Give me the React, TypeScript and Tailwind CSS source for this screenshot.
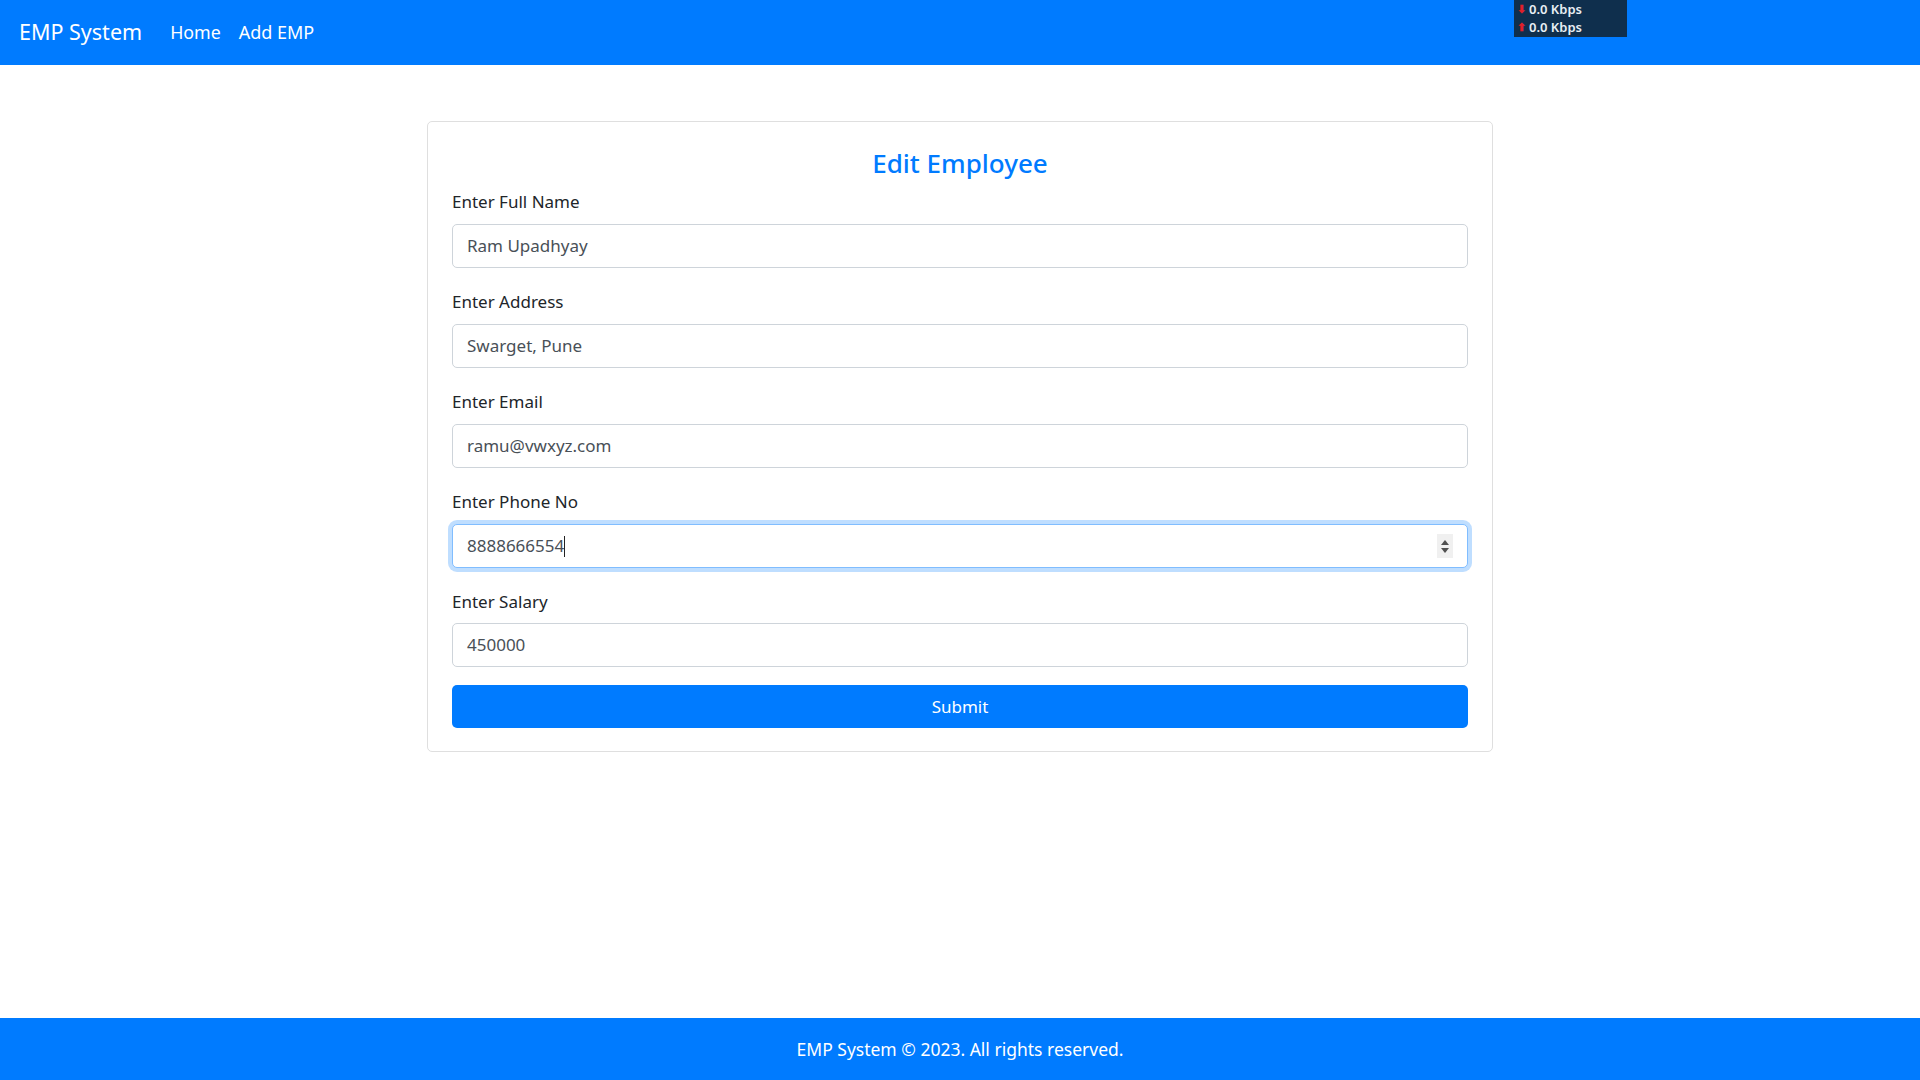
import React from "react";

const font = { fontFamily: '"Noto Sans", "Open Sans", Arial, sans-serif' };

function Field({ label, value, focused, number }: { label: string; value: string; focused?: boolean; number?: boolean }) {
  return (
    <div className="mb-[20px]">
      <label className="block text-[17px] leading-[27px] text-[#212529] mb-[9px]">{label}</label>
      <div
        className={
          "relative h-[44px] w-full rounded-[5px] border bg-white flex items-center px-[14px] text-[17px] text-[#495057] " +
          (focused ? "border-[#80bdff] shadow-[0_0_0_4px_rgba(0,123,255,0.25)]" : "border-[#ced4da]")
        }
      >
        <span>{value}</span>
        {focused && <span className="inline-block w-px h-[21px] bg-[#222]" />}
        {number && (
          <div className="absolute right-[14px] top-[9px] w-[16px] h-[24px] bg-[#f0f0f0] flex flex-col items-center justify-center gap-[3px]">
            <svg width="8" height="5" viewBox="0 0 8 5"><path d="M4 0L8 5H0Z" fill="#505050" /></svg>
            <svg width="8" height="5" viewBox="0 0 8 5"><path d="M0 0H8L4 5Z" fill="#505050" /></svg>
          </div>
        )}
      </div>
    </div>
  );
}

export default function App() {
  return (
    <div className="min-h-[1080px] flex flex-col bg-white" style={font}>
      <nav className="h-[65px] bg-[#007bff] flex items-center pl-[19px] relative">
        <span className="text-white text-[21.5px] mr-[28px]">EMP System</span>
        <span className="text-white text-[17.8px] mr-[18px]">Home</span>
        <span className="text-white text-[18px]">Add EMP</span>
        <div className="absolute left-[1514px] top-0 w-[113px] h-[37px] bg-[#0f2f4d] text-[#e8eef4] text-[13px] font-semibold leading-[18px] pt-[0px] pl-[3px]">
          <div className="flex items-center gap-[3px]"><span className="text-[#e0202a] text-[11px]">⬇</span>0.0 Kbps</div>
          <div className="flex items-center gap-[3px]"><span className="text-[#e0202a] text-[11px]">⬆</span>0.0 Kbps</div>
        </div>
      </nav>
      <main className="flex-1">
        <div className="w-[1066px] mx-auto mt-[56px] border border-[#dfdfdf] rounded-[5px] px-[24px] pt-[24px] pb-[23px]">
          <h2 className="text-center text-[#007bff] text-[26px] leading-[34px] font-medium mb-[8px]">Edit Employee</h2>
          <Field label="Enter Full Name" value="Ram Upadhyay" />
          <Field label="Enter Address" value="Swarget, Pune" />
          <Field label="Enter Email" value="ramu@vwxyz.com" />
          <Field label="Enter Phone No" value="8888666554" focused number />
          <div className="mb-[18px]">
            <label className="block text-[17px] leading-[27px] text-[#212529] mb-[8px]">Enter Salary</label>
            <div className="h-[44px] w-full rounded-[5px] border border-[#ced4da] bg-white flex items-center px-[14px] text-[17px] text-[#495057]">
              <span>450000</span>
            </div>
          </div>
          <button className="w-full h-[43px] rounded-[5px] bg-[#007bff] text-white text-[17px]">Submit</button>
        </div>
      </main>
      <footer className="h-[62px] bg-[#007bff] flex items-center justify-center text-white text-[17.5px]">
        EMP System © 2023. All rights reserved.
      </footer>
    </div>
  );
}
